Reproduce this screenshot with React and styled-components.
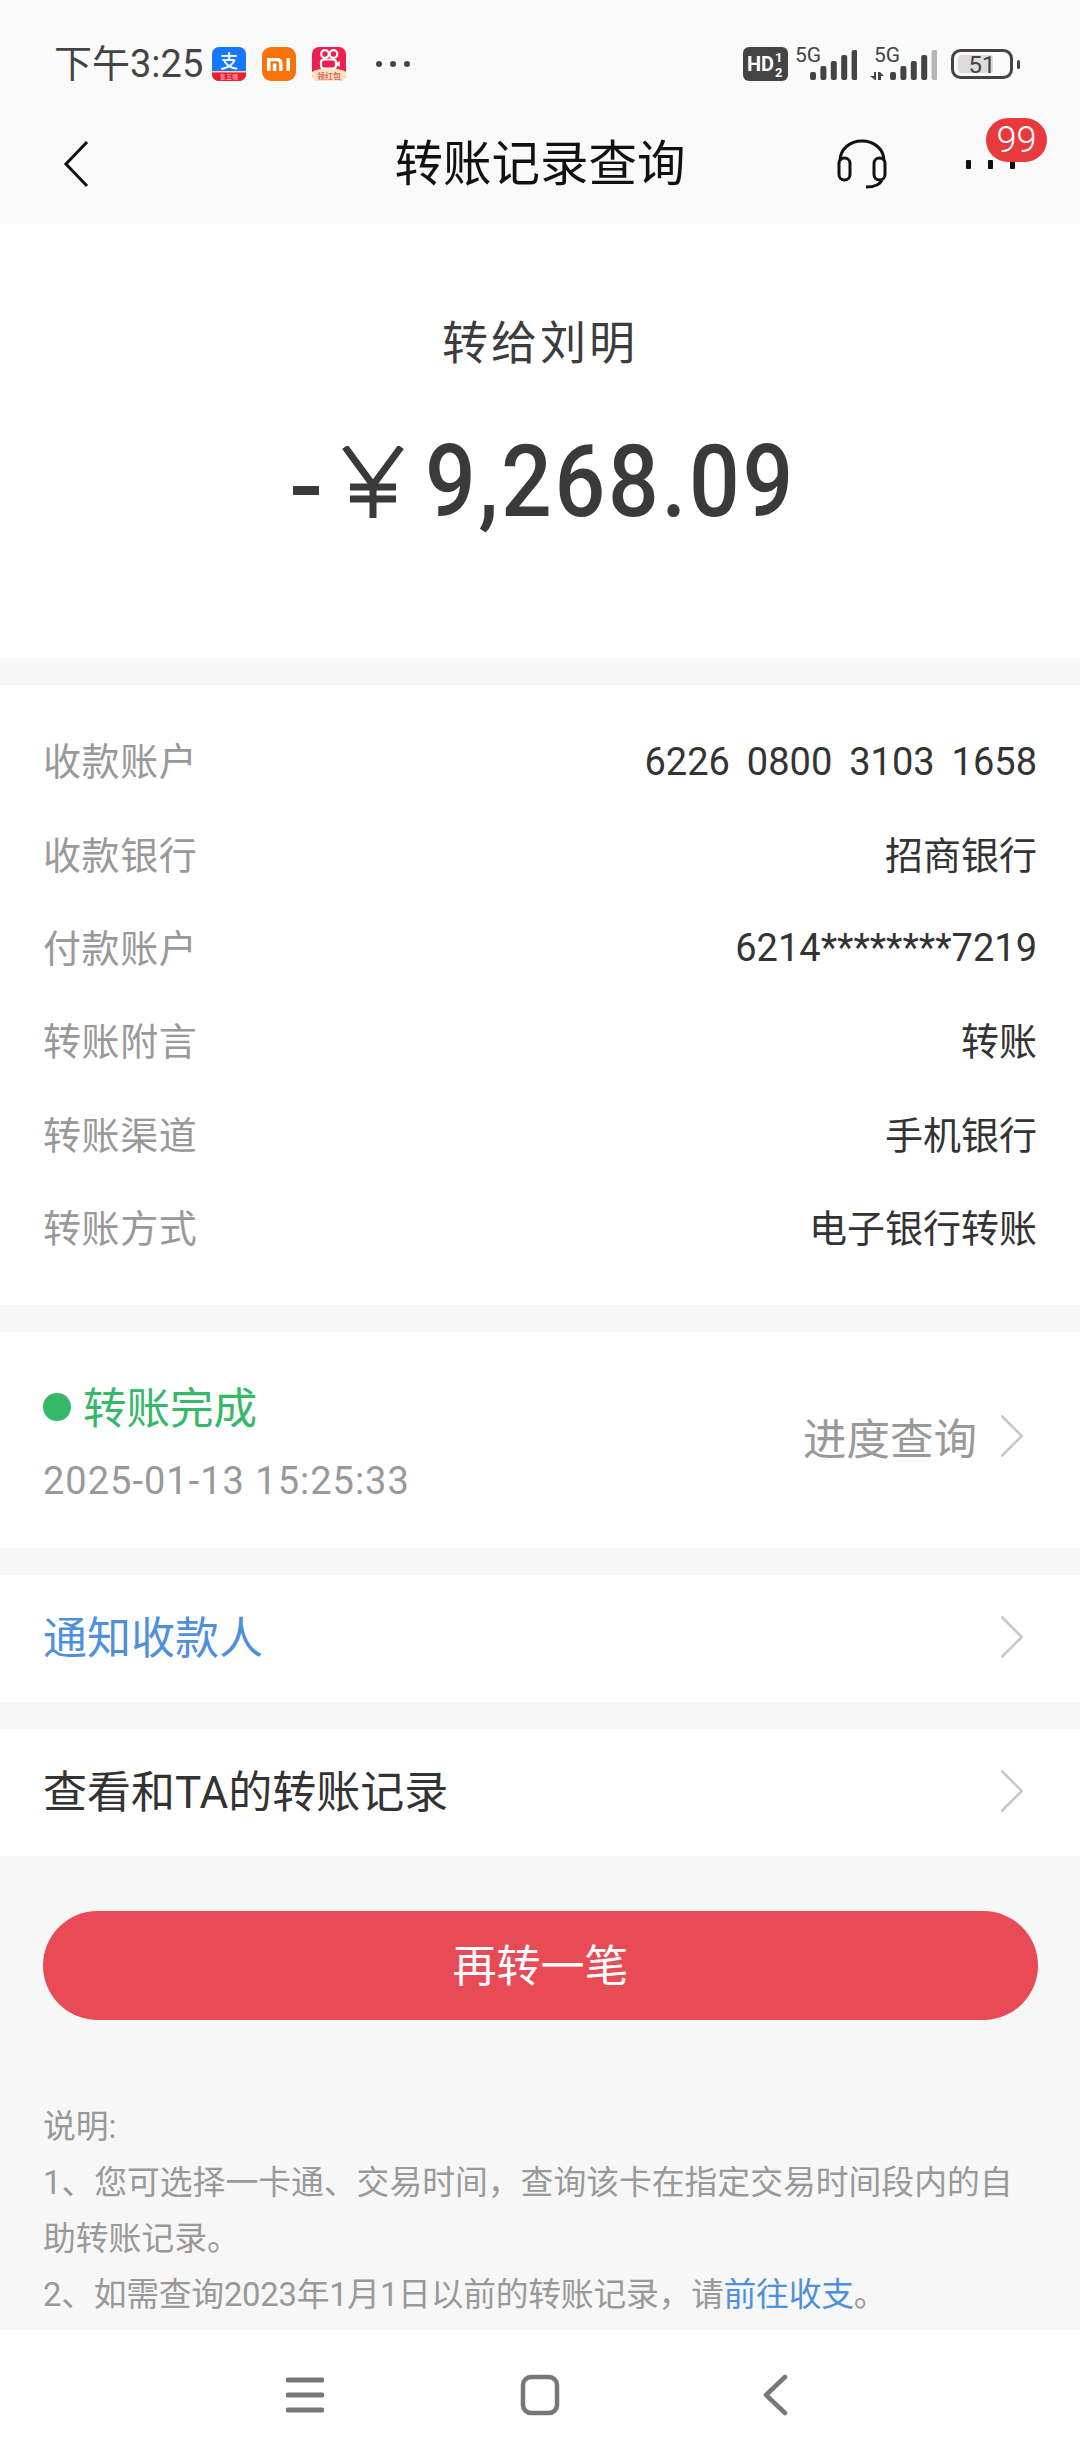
import React from "react";
import styled, { createGlobalStyle } from "styled-components";
import { ChevronRight } from "lucide-react";

const details = [
  ["收款账户", "6226 0800 3103 1658"],
  ["收款银行", "招商银行"],
  ["付款账户", "6214********7219"],
  ["转账附言", "转账"],
  ["转账渠道", "手机银行"],
  ["转账方式", "电子银行转账"],
];

const GlobalStyle = createGlobalStyle`
  html, body {
    margin: 0;
    padding: 0;
    background: #f7f7f7;
  }
  * {
    box-sizing: border-box;
  }
`;

const Page = styled.div`
  width: 1080px;
  height: 2460px;
  display: flex;
  flex-direction: column;
  overflow: hidden;
  background: #f7f7f7;
  color: #333;
  font-family: Roboto, "Noto Sans CJK SC", sans-serif;
`;

const Header = styled.header`
  height: 224px;
  flex: none;
  background: #fafafa;
`;

const StatusBar = styled.div`
  height: 106px;
  padding: 22px 60px 0 54px;
  display: flex;
  align-items: center;
  justify-content: space-between;
`;

const StatusGroup = styled.div`
  display: flex;
  align-items: center;
`;

const Time = styled.span`
  font-size: 38px;
  line-height: 44px;
  color: #444;
  margin-right: 9px;
`;

const AppIcon = styled.svg`
  width: 34px;
  height: 34px;
  margin-right: 16px;
  display: block;
`;

const StatusDots = styled.svg`
  width: 34px;
  height: 8px;
  margin-left: 14px;
  display: block;
`;

const StatusIcon = styled.svg`
  height: 34px;
  display: block;
  margin-left: ${props => props.$gap || 0}px;
`;

const SignalIcon = styled.svg`
  height: 40px;
  margin-top: -6px;
  display: block;
  margin-left: ${props => props.$gap || 0}px;
`;

const NavBar = styled.div`
  position: relative;
  height: 118px;
  display: flex;
  align-items: center;
  justify-content: center;
`;

const NavTitle = styled.h1`
  margin: 0;
  font-size: 48.5px;
  line-height: 60px;
  font-weight: 400;
  color: #111;
`;

const NavIcon = styled.svg`
  position: absolute;
  display: block;
  left: ${props => props.$left}px;
  top: ${props => props.$top}px;
`;

const Badge = styled.span`
  position: absolute;
  left: 986px;
  top: 12px;
  width: 61px;
  height: 44px;
  border-radius: 22px;
  background: #e83a3e;
  color: #fff;
  font-size: 36px;
  font-weight: 300;
  line-height: 44px;
  text-align: center;
`;

const Hero = styled.section`
  height: 434px;
  flex: none;
  background: #fff;
  display: flex;
  flex-direction: column;
  align-items: center;
`;

const Payee = styled.div`
  margin-top: 89px;
  font-size: 46px;
  line-height: 60px;
  letter-spacing: 3px;
  color: #3c3c3c;
`;

const Amount = styled.div`
  margin-top: 54px;
  display: flex;
  align-items: center;
  font-size: 101px;
  line-height: 110px;
  font-weight: 500;
  color: #3a3a3a;
`;

const Minus = styled.span`
  width: 26px;
  height: 9px;
  margin: 16px 23px 0 0;
  background: #3a3a3a;
`;

const Yuan = styled.svg`
  width: 62px;
  height: 72px;
  margin-right: 21px;
  display: block;
`;

const AmountDigits = styled.span`
  display: block;
  width: 363px;
  white-space: nowrap;
  letter-spacing: 3px;
  transform: scaleX(0.885);
  transform-origin: left center;
`;

const Section = styled.section`
  flex: none;
  margin-top: ${props => props.$gap || 27}px;
  background: #fff;
`;

const DetailList = styled.dl`
  margin: 0;
  padding: 30px 43px;
`;

const DetailRow = styled.div`
  height: 93.4px;
  display: flex;
  align-items: center;
  justify-content: space-between;
  font-size: 38px;
`;

const DetailLabel = styled.dt`
  padding-bottom: 6px;
  letter-spacing: 0.6px;
  color: #999;
`;

const DetailValue = styled.dd`
  margin: 0;
  padding-bottom: ${props => (props.$digits ? 0 : 6)}px;
  word-spacing: 7.5px;
  color: #333;
`;

const StatusSection = styled(Section)`
  height: 216px;
  padding: 43px 43px 0;
  display: flex;
  justify-content: space-between;
`;

const StatusInfo = styled.div`
  display: flex;
  flex-direction: column;
`;

const StatusTitle = styled.div`
  display: flex;
  align-items: center;
  height: 60px;
  font-size: 43.5px;
  color: #35b868;
`;

const GreenDot = styled.span`
  width: 28px;
  height: 28px;
  margin: 4px 12px 0 0;
  border-radius: 50%;
  background: #35b868;
`;

const StatusDate = styled.div`
  margin-top: 16px;
  font-size: 38px;
  line-height: 60px;
  letter-spacing: 1px;
  color: #999;
`;

const ProgressLink = styled.div`
  height: 122px;
  display: flex;
  align-items: center;
  font-size: 43.5px;
  color: #999;
`;

const LinkRow = styled(Section)`
  height: 127px;
  padding: 0 43px 8px;
  display: flex;
  align-items: center;
  justify-content: space-between;
  font-size: 44px;
  color: ${props => (props.$blue ? "#4f8fdb" : "#333")};
`;

const Chevron = styled(ChevronRight)`
  width: 78px;
  height: 78px;
  margin: 5px -14px 0 0;
  color: #c8c8c8;
  flex: none;
`;

const ProgressChevron = styled(Chevron)`
  margin: 0 -14px 0 -4px;
`;

const AgainButton = styled.button`
  display: block;
  flex: none;
  width: 995px;
  height: 109px;
  margin: 55px 0 0 43px;
  padding: 0 0 6px;
  border: 0;
  border-radius: 55px;
  background: #e84a56;
  color: #fff;
  font-family: inherit;
  font-size: 44px;
`;

const Notes = styled.div`
  flex: 1;
  margin-top: 79px;
  padding: 0 43px;
  font-size: 32.8px;
  line-height: 56px;
  color: #999;
`;

const NoteTight = styled.span`
  letter-spacing: -0.25px;
`;

const NoteLink = styled.span`
  color: #4f8fdb;
`;

const BottomNav = styled.nav`
  height: 130px;
  flex: none;
  background: #fff;
  display: flex;
  align-items: center;
  justify-content: center;
  padding-right: 6px;
`;

const BottomIcon = styled.svg`
  display: block;
  margin-left: ${props => props.$gap || 0}px;
`;

function SignalBars({ x, dim }) {
  const heights = [8, 14, 19, 25, 30];
  return heights.map((h, i) => (
    <rect
      key={i}
      x={x + i * 10.4}
      y={33 - h}
      width="6"
      height={h}
      rx="2"
      fill={dim && i === 4 ? "#b5b5b5" : "#444"}
    />
  ));
}

export default function App() {
  return (
    <Page lang="zh-CN">
      <GlobalStyle />
      <Header>
        <StatusBar>
          <StatusGroup>
            <Time>下午3:25</Time>
            <AppIcon viewBox="0 0 34 34">
              <rect width="34" height="34" rx="7" fill="#1677ff" />
              <path d="M0 25h34v2a7 7 0 0 1-7 7H7a7 7 0 0 1-7-7z" fill="#e8202a" />
              <rect y="24" width="34" height="1.500" fill="#f8d0a0" />
              <text x="17" y="21" fontSize="18" textAnchor="middle" fontWeight="500" fill="#fff" fontFamily="Noto Sans CJK SC">支</text>
              <text x="17" y="32" fontSize="6" textAnchor="middle" fill="#fbd" fontFamily="Noto Sans CJK SC">集五福</text>
            </AppIcon>
            <AppIcon viewBox="0 0 34 34">
              <rect width="34" height="34" rx="9" fill="#f9720c" />
              <path d="M5 11h10.500a5 5 0 0 1 5 5v8h-3.500v-8a1.800 1.800 0 0 0-1.800-1.800H8.500V24H5zM10.800 16.500h3.500V24h-3.500zM24.500 11H28v13h-3.500z" fill="#fff" />
            </AppIcon>
            <AppIcon viewBox="0 0 34 34">
              <rect width="34" height="34" rx="7" fill="#ee1f4f" />
              <path d="M0 25c8-5 26-5 34 0v3a6 6 0 0 1-6 6H6a6 6 0 0 1-6-6z" fill="#fde3c0" />
              <circle cx="13" cy="7" r="3.800" fill="none" stroke="#fff" strokeWidth="2.200" />
              <circle cx="21.500" cy="7" r="3.800" fill="none" stroke="#fff" strokeWidth="2.200" />
              <rect x="9" y="12.500" width="15" height="9" rx="3" fill="none" stroke="#fff" strokeWidth="2.200" />
              <path d="M24 16l4-2v6l-4-2z" fill="#fff" />
              <text x="17" y="32" fontSize="8" textAnchor="middle" fill="#d8202a" fontFamily="Noto Sans CJK SC">领红包</text>
            </AppIcon>
            <StatusDots viewBox="0 0 34 8">
              <circle cx="3" cy="4" r="3" fill="#444" />
              <circle cx="17" cy="4" r="3" fill="#444" />
              <circle cx="31" cy="4" r="3" fill="#444" />
            </StatusDots>
          </StatusGroup>
          <StatusGroup>
            <StatusIcon width="45" viewBox="0 0 45 34">
              <rect width="45" height="34" rx="6" fill="#444" />
              <text x="4" y="24" fontSize="20" fontWeight="700" fill="#fff" fontFamily="Roboto">HD</text>
              <text x="32" y="15" fontSize="13" fontWeight="700" fill="#fff" fontFamily="Roboto">1</text>
              <text x="32" y="30" fontSize="13" fontWeight="700" fill="#fff" fontFamily="Roboto">2</text>
            </StatusIcon>
            <SignalIcon $gap={7} width="62" viewBox="0 -6 62 40">
              <text x="0" y="15" fontSize="21" fill="#444" fontFamily="Roboto">5G</text>
              <SignalBars x={15} />
            </SignalIcon>
            <SignalIcon $gap={13} width="67" viewBox="0 -6 67 40">
              <text x="4" y="15" fontSize="21" fill="#444" fontFamily="Roboto">5G</text>
              <path d="M0 29h4v-4h2v8H5zM8 25h2l4 4h-3v4H8z" fill="#444" />
              <SignalBars x={20} dim />
            </SignalIcon>
            <StatusIcon $gap={14} width="69" viewBox="0 0 69 34">
              <rect x="1.500" y="3.500" width="59" height="27" rx="8" fill="none" stroke="#444" strokeWidth="3" />
              <rect x="7" y="8" width="35" height="18" rx="3" fill="#dcdcdc" />
              <rect x="66" y="13" width="3" height="9" rx="1.500" fill="#444" />
              <text x="31" y="26" fontSize="24" textAnchor="middle" fill="#444" fontFamily="Roboto">51</text>
            </StatusIcon>
          </StatusGroup>
        </StatusBar>
        <NavBar>
          <NavIcon $left={62} $top={33} width="28" height="50" viewBox="0 0 28 50">
            <path d="M25 3L4 25l21 22" fill="none" stroke="#111" strokeWidth="3" />
          </NavIcon>
          <NavTitle>转账记录查询</NavTitle>
          <NavIcon $left={836} $top={33} width="52" height="50" viewBox="0 0 52 50">
            <path d="M4 22C4 10 14 2 26 2s22 8 22 20" fill="none" stroke="#111" strokeWidth="3" />
            <rect x="3" y="19" width="11" height="22" rx="5.500" fill="none" stroke="#111" strokeWidth="3" />
            <rect x="38" y="19" width="11" height="22" rx="5.500" fill="none" stroke="#111" strokeWidth="3" />
            <path d="M46 41c-2 5-8 7-16 7" fill="none" stroke="#111" strokeWidth="3" />
          </NavIcon>
          <NavIcon $left={966} $top={54} width="50" height="10" viewBox="0 0 50 10">
            <rect width="5" height="9" rx="1" fill="#111" />
            <rect x="22" width="5" height="9" rx="1" fill="#111" />
            <rect x="44" width="5" height="9" rx="1" fill="#111" />
          </NavIcon>
          <Badge>99</Badge>
        </NavBar>
      </Header>

      <Hero>
        <Payee>转给刘明</Payee>
        <Amount>
          <Minus />
          <Yuan viewBox="0 0 62 72">
            <path d="M3 1l28 38L59 1M31 39v33M8 41h46M8 53h46" fill="none" stroke="#3a3a3a" strokeWidth="7" />
          </Yuan>
          <AmountDigits>9,268.09</AmountDigits>
        </Amount>
      </Hero>

      <Section>
        <DetailList>
          {details.map(([label, value]) => (
            <DetailRow key={label}>
              <DetailLabel>{label}</DetailLabel>
              <DetailValue $digits={/\d/.test(value)}>{value}</DetailValue>
            </DetailRow>
          ))}
        </DetailList>
      </Section>

      <StatusSection>
        <StatusInfo>
          <StatusTitle>
            <GreenDot />
            转账完成
          </StatusTitle>
          <StatusDate>2025-01-13 15:25:33</StatusDate>
        </StatusInfo>
        <ProgressLink>
          进度查询
          <ProgressChevron strokeWidth={0.8} />
        </ProgressLink>
      </StatusSection>

      <LinkRow $blue>
        通知收款人
        <Chevron strokeWidth={0.8} />
      </LinkRow>
      <LinkRow>
        查看和TA的转账记录
        <Chevron strokeWidth={0.8} />
      </LinkRow>

      <AgainButton>再转一笔</AgainButton>

      <Notes>
        说明:
        <br />
        1、您可选择一卡通、交易时间，查询该卡在指定交易时间段内的自助转账记录。
        <br />
        <NoteTight>2、如需查询2023年1月1日以前的转账记录，请<NoteLink>前往收支</NoteLink>。</NoteTight>
      </Notes>

      <BottomNav>
        <BottomIcon width="38" height="38" viewBox="0 0 38 38">
          <path d="M2 4h34M2 19h34M2 34h34" stroke="#777" strokeWidth="5" strokeLinecap="round" />
        </BottomIcon>
        <BottomIcon $gap={196} width="40" height="42" viewBox="0 0 40 42">
          <rect x="3" y="3" width="34" height="36" rx="8" fill="none" stroke="#777" strokeWidth="4.500" />
        </BottomIcon>
        <BottomIcon $gap={202} width="26" height="42" viewBox="0 0 26 42">
          <path d="M23 3L4 21l19 18" fill="none" stroke="#777" strokeWidth="4.500" strokeLinecap="round" strokeLinejoin="round" />
        </BottomIcon>
      </BottomNav>
    </Page>
  );
}
